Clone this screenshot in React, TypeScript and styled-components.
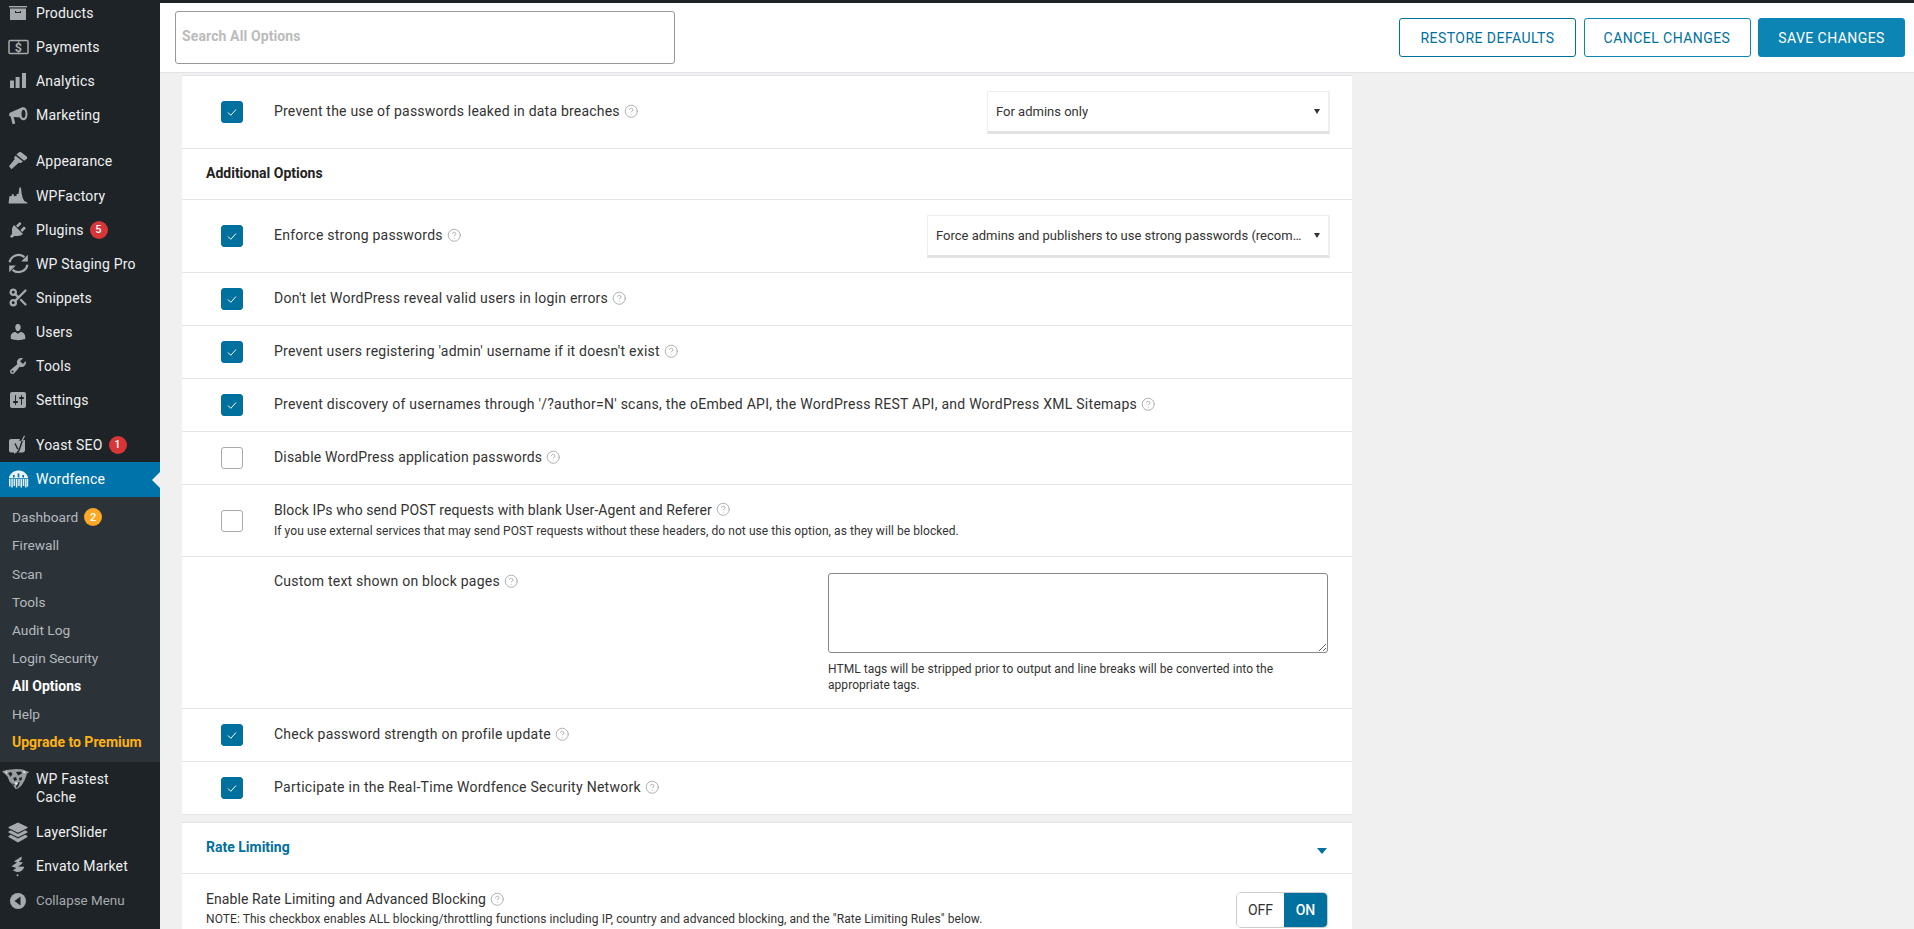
import { ReactNode } from "react";
import styled, { createGlobalStyle } from "styled-components";
import { CircleHelp, Scissors } from "lucide-react";

const GlobalStyle = createGlobalStyle`
  * { box-sizing: border-box; }
  html, body { margin: 0; padding: 0; height: 100%; overflow: hidden; }
  body { font-family: Roboto, "Liberation Sans", sans-serif; background: #f0f0f0; color: #333; }
`;

const blue = "#00709e";
const iconGray = "#a7aaad";

const Page = styled.div`
  display: grid;
  grid-template-columns: 160px 1fr;
  width: 1914px;
  height: 929px;
  overflow: hidden;
`;

/* sidebar */

const Sidebar = styled.nav`
  background: #1d2327;
  height: 929px;
  overflow: hidden;
`;

const MenuList = styled.div`
  margin-top: -4px;
`;

const MenuItem = styled.div<{ $gap?: number; $active?: boolean; $tall?: boolean; $dim?: boolean }>`
  position: relative;
  display: flex;
  align-items: ${(p) => (p.$tall ? "flex-start" : "center")};
  height: ${(p) => (p.$tall ? "53px" : p.$active ? "35px" : "34.1px")};
  margin-top: ${(p) => p.$gap ?? 0}px;
  padding-top: ${(p) => (p.$tall ? "8px" : "0")};
  padding-bottom: ${(p) => (p.$active ? "2px" : "0")};
  background: ${(p) => (p.$active ? "#0073aa" : "transparent")};
  color: ${(p) => (p.$dim ? iconGray : p.$active ? "#fff" : "#f0f0f1")};
  font-size: ${(p) => (p.$dim ? "13.4px" : "14px")};
  letter-spacing: ${(p) => (p.$dim ? "0" : "0.2px")};
  line-height: 18px;
`;

const IconSlot = styled.span`
  flex: 0 0 36px;
  display: flex;
  justify-content: center;
  align-items: center;
  svg { display: block; }
`;

const ItemLabel = styled.span`
  white-space: pre-line;
`;

const Badge = styled.span<{ $color: string }>`
  display: inline-flex;
  align-items: center;
  justify-content: center;
  width: 18px;
  height: 18px;
  margin-left: 6px;
  border-radius: 50%;
  background: ${(p) => p.$color};
  color: #fff;
  font-size: 11px;
  font-weight: 500;
`;

const ActiveNotch = styled.span`
  position: absolute;
  right: 0;
  top: 50%;
  margin-top: -8px;
  border: 8px solid transparent;
  border-right-color: #f0f0f0;
  border-left-width: 0;
`;

const SubMenu = styled.div`
  background: #2c3338;
  padding: 6px 0;
`;

const SubItem = styled.div<{ $tone?: "current" | "upgrade" }>`
  display: flex;
  align-items: center;
  height: 28.125px;
  padding-left: 12px;
  font-size: ${(p) => (p.$tone ? "14px" : "13.7px")};
  font-weight: ${(p) => (p.$tone ? 700 : 400)};
  color: ${(p) => (p.$tone === "current" ? "#fff" : p.$tone === "upgrade" ? "#fcb214" : "#b4b9be")};
`;

/* main column */

const Main = styled.main`
  min-width: 0;
  height: 929px;
  overflow: hidden;
  background: #f0f0f0;
  border-top: 3px solid #1d2327;
`;

const Toolbar = styled.div`
  display: flex;
  align-items: center;
  height: 70px;
  padding: 0 9px 0 15px;
  background: #fff;
  border-bottom: 1px solid #e2e4e7;
`;

const SearchInput = styled.input`
  width: 500px;
  height: 53px;
  padding: 0 6px 3px;
  border: 1px solid #999;
  border-radius: 3px;
  font-family: inherit;
  font-size: 14px;
  font-weight: 700;
  letter-spacing: 0.12px;
  background: #fff;
  &::placeholder { color: #bbb; opacity: 1; }
`;

const Actions = styled.div`
  display: flex;
  gap: 7.5px;
  margin-left: auto;
`;

const ActionButton = styled.button<{ $primary?: boolean; $width: number; $edge: string }>`
  width: ${(p) => p.$width}px;
  height: 39px;
  border: 1px solid ${(p) => p.$edge};
  border-radius: 3px;
  background: ${(p) => (p.$primary ? "#0c84b4" : "#fff")};
  color: ${(p) => (p.$primary ? "#fff" : blue)};
  font-family: inherit;
  font-size: 14px;
  letter-spacing: 0.45px;
  text-transform: uppercase;
`;

const Content = styled.div`
  padding: 2px 0 0 22px;
  width: 1192px;
`;

const Card = styled.section<{ $spaced?: boolean }>`
  background: #fff;
  margin-top: ${(p) => (p.$spaced ? "7px" : "0")};
  border-top: 1px solid #e2e4e7;
  border-bottom: 1px solid #e2e4e7;
`;

const Row = styled.div<{ $h: number; $top?: boolean; $last?: boolean }>`
  display: flex;
  align-items: ${(p) => (p.$top ? "flex-start" : "center")};
  height: ${(p) => p.$h}px;
  padding: 0 22px 0 39px;
  border-bottom: ${(p) => (p.$last ? "none" : "1px solid #e2e4e7")};
`;

const HeadRow = styled.div<{ $h: number }>`
  display: flex;
  align-items: center;
  justify-content: space-between;
  height: ${(p) => p.$h}px;
  padding: 0 25px 2px 24px;
  border-bottom: 1px solid #e2e4e7;
`;

const SectionTitle = styled.h3<{ $link?: boolean }>`
  margin: 0;
  font-size: 14px;
  font-weight: 700;
  color: ${(p) => (p.$link ? blue : "#222")};
`;

const CaretDown = styled.span`
  margin-top: 8px;
  border-style: solid;
  border-width: 6px 5.5px 0;
  border-color: ${blue} transparent transparent;
`;

const CheckBox = styled.span<{ $on: boolean }>`
  flex: 0 0 22px;
  display: flex;
  align-items: center;
  justify-content: center;
  width: 22px;
  height: 22px;
  margin-right: 31px;
  border-radius: 3px;
  background: ${(p) => (p.$on ? blue : "#fff")};
  border: 1px solid ${(p) => (p.$on ? blue : "#aaa")};
`;

const Spacer = styled.span`
  flex: 0 0 53px;
`;

const LabelBlock = styled.div<{ $pushed?: boolean }>`
  margin-top: ${(p) => (p.$pushed ? "14px" : "-2px")};
`;

const LabelText = styled.div<{ $spacing: number }>`
  display: flex;
  align-items: center;
  gap: 4px;
  font-size: 14px;
  line-height: 20px;
  color: #333;
  letter-spacing: ${(p) => p.$spacing}px;
`;

const HelpIcon = styled(CircleHelp)`
  flex: none;
  width: 14.5px;
  height: 14.5px;
  color: #a3a3a3;
`;

const SubText = styled.div<{ $tight?: boolean }>`
  margin-top: ${(p) => (p.$tight ? "1px" : "2px")};
  font-size: 12px;
  line-height: 18px;
  letter-spacing: 0.07px;
  color: #333;
`;

const FakeSelect = styled.div<{ $width: number }>`
  position: relative;
  display: flex;
  align-items: center;
  flex: none;
  width: ${(p) => p.$width}px;
  height: 43px;
  margin-left: auto;
  padding: 0 22px 0 8px;
  background: #fff;
  border: 1px solid #eee;
  border-bottom: 3px solid #e2e2e2;
  border-right-width: 2px;
  font-size: 13px;
  color: #333;
`;

const SelectText = styled.span`
  overflow: hidden;
  white-space: nowrap;
  text-overflow: ellipsis;
`;

const SelectArrow = styled.span`
  position: absolute;
  right: 8px;
  top: 17px;
  border-style: solid;
  border-width: 5px 3.5px 0;
  border-color: #333 transparent transparent;
`;

const TextColumn = styled.div`
  flex: none;
  width: 500px;
  margin: 16px 2px 0 auto;
`;

const BlockText = styled.textarea`
  display: block;
  width: 500px;
  height: 80px;
  border: 1px solid #888;
  border-radius: 3px;
  background: #fff;
`;

const HelpNote = styled.div`
  margin-top: 8px;
  font-size: 12px;
  line-height: 16px;
  letter-spacing: 0.05px;
  color: #333;
`;

const RateRow = styled.div`
  display: flex;
  justify-content: space-between;
  align-items: flex-start;
  padding: 15px 24px 0 24px;
  height: 70px;
`;

const Toggle = styled.div`
  display: flex;
  flex: none;
  width: 92px;
  height: 36px;
  margin-top: 3px;
  border: 1px solid #ccc;
  border-radius: 5px;
  overflow: hidden;
  font-size: 14px;
`;

const ToggleSide = styled.span<{ $on?: boolean }>`
  display: flex;
  align-items: center;
  justify-content: center;
  flex: ${(p) => (p.$on ? "0 0 43px" : "1")};
  background: ${(p) => (p.$on ? blue : "#fff")};
  color: ${(p) => (p.$on ? "#fff" : "#333")};
  font-weight: ${(p) => (p.$on ? 500 : 400)};
`;

/* sidebar icons, 20 unit box unless noted */

const Dash = ({ d, w = 20 }: { d: string; w?: number }) => (
  <svg width={w} height={w} viewBox="0 0 20 20" fill={iconGray} fillRule="evenodd">
    <path d={d} />
  </svg>
);

const icons: Record<string, ReactNode> = {
  products: (
    <svg width="20" height="20" viewBox="0 0 20 20" fill={iconGray}>
      <rect x="1" y="3" width="18" height="1.4" />
      <path fillRule="evenodd" d="M2 5.5h16V17H2zM7 8v2h6V8h-1v1H8V8z" />
    </svg>
  ),
  payments: (
    <svg width="21" height="20" viewBox="0 0 21 20">
      <rect x="1" y="3.5" width="19" height="13" rx="1" fill="none" stroke={iconGray} strokeWidth="1.5" />
      <text x="10.5" y="14.6" textAnchor="middle" fontSize="12.5" fontWeight="700" fontFamily="Roboto, sans-serif" fill={iconGray}>
        $
      </text>
    </svg>
  ),
  analytics: (
    <svg width="20" height="20" viewBox="0 0 20 20" fill={iconGray}>
      <rect x="2" y="9.5" width="4" height="7.5" />
      <rect x="7.6" y="6" width="4" height="11" />
      <rect x="14" y="2" width="4" height="15" />
    </svg>
  ),
  marketing: (
    <svg width="20" height="20" viewBox="0 0 20 20" fill={iconGray}>
      <path fillRule="evenodd" d="M15.5 2.2c2.4 0 4 3 4 6.8s-1.6 6.3-4 6.3c-1.6 0-3-1.1-3.6-2.8L5.6 12l1.7 6.5-2.7.8-1.9-7.5C1.5 11.4.8 10.2 1.2 9 1.5 8 2.4 7.6 3 7.3l9-4c.8-.7 2-1.100 3.500-1.100zM15.500 4.700c-1.200 0-2 1.900-2 4.300s.8 4 2 4 2-1.600 2-4-.8-4.300-2-4.300z" />
    </svg>
  ),
  appearance: (
    <svg width="20" height="20" viewBox="0 0 20 20" fill={iconGray}>
      <path d="M11 1.200l1.800-.2 6.200 4.800.2 1.700-3 2.300-7.800-6.300z" />
      <path d="M7.600 4.700l7.300 5.900-2 1.500-2.200-.3-7.200 6.400L1 15.200l5.600-6.900-.4-2.300z" />
    </svg>
  ),
  factory: (
    <svg width="20" height="20" viewBox="0 0 20 20" fill={iconGray}>
      <path d="M.8 17.500C.3 17.200 1 15.500 1.400 10.200l2.400-.1V8.200h2v2l2.800-.5V8h1.900l.9-6.500h1.500l.8 6.500 1 4 1.600 3 3 1.600c.3.500 0 .9-.6.900z" />
    </svg>
  ),
  plugins: (
    <Dash d="M13.11 4.360L9.870 7.600 8 5.730l3.240-3.240c.35-.34 1.050-.2 1.560.32.52.51.66 1.210.31 1.550zm-8 1.770l.91-1.120 9.010 9.010-1.190.84c-.71.71-2.630 1.160-3.820 1.160H6.140L4.900 17.260c-.59.59-1.540.59-2.120 0-.59-.58-.59-1.530 0-2.120l1.240-1.240v-3.880c0-1.130.4-3.190 1.090-3.890zm7.260 3.970l3.240-3.240c.34-.35 1.040-.21 1.550.31.52.51.66 1.210.31 1.550l-3.240 3.250z" />
  ),
  staging: (
    <svg width="21" height="21" viewBox="0 0 21 21" fill="none" stroke={iconGray} strokeWidth="2.200">
      <path d="M1.600 9.300A9 9 0 0 1 16.400 4.200" />
      <path d="M19.400 11.700A9 9 0 0 1 4.600 16.800" />
      <path d="M19.800 1.800v6.600h-6.600z" fill={iconGray} stroke="none" />
      <path d="M1.200 19.200v-6.600h6.600z" fill={iconGray} stroke="none" />
    </svg>
  ),
  snippets: <Scissors size={21} strokeWidth={2.6} color={iconGray} />,
  users: (
    <Dash d="M10 9.250c-2.270 0-2.730-3.440-2.730-3.440C7 4.020 7.820 2 9.970 2c2.160 0 2.980 2.020 2.710 3.810 0 0-.41 3.440-2.680 3.440zm0 2.570L12.720 10c2.390 0 4.520 2.330 4.520 4.530v2.490s-3.650 1.130-7.240 1.130c-3.650 0-7.240-1.130-7.240-1.130v-2.490c0-2.250 1.940-4.480 4.470-4.480z" />
  ),
  tools: (
    <Dash d="M16.680 9.770c-1.340 1.340-3.300 1.670-4.950.99l-5.410 6.520c-.99.99-2.590.99-3.580 0s-.99-2.590 0-3.570l6.520-5.420c-.68-1.650-.35-3.610.99-4.950 1.280-1.280 3.120-1.620 4.720-1.060l-2.890 2.890 2.820 2.820 2.860-2.870c.53 1.580.18 3.390-1.080 4.670zM3.810 16.210c.4.39 1.040.39 1.430 0 .4-.4.4-1.040 0-1.430-.39-.4-1.030-.4-1.430 0-.39.39-.39 1.030 0 1.430z" />
  ),
  settings: (
    <Dash d="M18 16V4c0-1.100-.9-2-2-2H4c-1.100 0-2 .9-2 2v12c0 1.100.9 2 2 2h12c1.100 0 2-.9 2-2zM8 11h1c.55 0 1 .45 1 1s-.45 1-1 1H8v1.500c0 .28-.22.5-.5.5s-.5-.22-.5-.5V13H6c-.55 0-1-.45-1-1s.45-1 1-1h1V5.500c0-.28.22-.5.5-.5s.5.22.5.5V11zm5-2h-1c-.55 0-1-.45-1-1s.45-1 1-1h1V5.500c0-.28.22-.5.5-.5s.5.22.5.5V7h1c.55 0 1 .45 1 1s-.45 1-1 1h-1v5.500c0 .28-.22.5-.5.5s-.5-.22-.5-.5V9z" />
  ),
  yoast: (
    <svg width="20" height="20" viewBox="0 0 20 20">
      <path fill={iconGray} d="M3 4h9l-1 2 6-1v10c0 1.500-1 2.500-2.500 2.500H8L6.500 19l-.5-1.500H3c-1.100 0-2-.9-2-2V6c0-1.100.9-2 2-2z" />
      <path fill="none" stroke="#1d2327" strokeWidth="1.400" d="M7 8.500l3 6M14.500 5l-3.500 10.500c-.4 1-1 1.500-2 1.700" />
      <path fill="none" stroke={iconGray} strokeWidth="1.200" d="M16.500.8L14 6" />
    </svg>
  ),
  wordfence: (
    <svg width="21" height="20" viewBox="0 0 21 20" fill="#e9f2f7">
      <path d="M1 8C3 3.500 6.500 1.500 10.500 1.500S18 3.500 20 8v1.200H1z" />
      <path fill="#0073aa" d="M5 8.500h1.600V6H5zM9.700 8.500h1.600V4.600H9.700zM14.400 8.500H16V6h-1.600z" />
      <rect x="1" y="10" width="1.500" height="7.500" />
      <rect x="3.300" y="10" width="1.500" height="8.500" />
      <rect x="5.600" y="10" width="1.500" height="7" />
      <rect x="7.900" y="10" width="1.500" height="8.500" />
      <rect x="10.200" y="10" width="1.500" height="7" />
      <rect x="12.500" y="10" width="1.500" height="8.500" />
      <rect x="14.800" y="10" width="1.500" height="7" />
      <rect x="17.100" y="10" width="1.500" height="8.500" />
      <rect x="19" y="10" width="1.200" height="7.500" />
    </svg>
  ),
  cheetah: (
    <svg width="28" height="22" viewBox="0 0 28 22" style={{ marginTop: -1, marginLeft: -4 }}>
      <path fill="#9a9d9f" d="M0 2.500l4-1.500L9 .5l6-.5 6 .5 3 1.500 3.500 1-2.500 1.500-1 3-1.500 4-3 5-3.500 3-2.500.5-3-4.500-3-3-2-5L3 5z" />
      <path fill="#1d2327" d="M6 4l3-1 1.500 2-2 3zM14 3l5-.5 1 2-4 2zM11 9l3-1 1 3-2.500 1zM17 9l3-1-.5 3-2 1zM9 12l2 3 2-1-1 3zM15 14l3-1-2 5-2 1z" />
      <path fill="#e8e8e8" d="M3 3l2-.5L5 5zM21 2l3 .5-2 2zM12 14l3-1 1 2-2 1z" />
    </svg>
  ),
  layers: (
    <svg width="20" height="21" viewBox="0 0 20 21" fill={iconGray}>
      <path d="M10 .5l9.500 4.500v1L10 10.800.5 6V5z" />
      <path d="M2.800 8.200L.5 9.500v1L10 15.300l9.500-4.800v-1l-2.300-1.300L10 12z" />
      <path d="M2.800 12.700L.5 14v1l9.500 5.500 9.500-5.500v-1l-2.300-1.300L10 16.500z" />
    </svg>
  ),
  envato: (
    <svg width="20" height="21" viewBox="0 0 20 21" fill={iconGray}>
      <path d="M13.500 .5c.8 2.500-.5 4-2.800 5.500l4 .2c-.8 2.200-3 3.200-5.200 4.300l6.800.2c-1 3.500-4 5.500-7.500 5.300L5 14.500l3.200-2.500-4.700-1.800L9 6.500 6 5.500z" />
      <circle cx="9.500" cy="19.200" r="1" />
    </svg>
  ),
  collapse: (
    <svg width="20" height="20" viewBox="0 0 20 20">
      <circle cx="10" cy="10" r="8" fill={iconGray} />
      <path fill="#1d2327" d="M12.500 5.500v9L6.500 10z" />
    </svg>
  ),
};

const topMenu = [
  { icon: "products", label: "Products" },
  { icon: "payments", label: "Payments" },
  { icon: "analytics", label: "Analytics" },
  { icon: "marketing", label: "Marketing" },
  { icon: "appearance", label: "Appearance", gap: 12 },
  { icon: "factory", label: "WPFactory" },
  { icon: "plugins", label: "Plugins", badge: "5" },
  { icon: "staging", label: "WP Staging Pro" },
  { icon: "snippets", label: "Snippets" },
  { icon: "users", label: "Users" },
  { icon: "tools", label: "Tools" },
  { icon: "settings", label: "Settings" },
  { icon: "yoast", label: "Yoast SEO", badge: "1", gap: 11 },
];

function Check() {
  return (
    <svg width="10" height="9" viewBox="0 0 10 9" fill="none" stroke="#fff" strokeWidth="1">
      <path d="M1 4.500l2.800 2.800L9 1.500" />
    </svg>
  );
}

function Label({ children, spacing = 0.24 }: { children: ReactNode; spacing?: number }) {
  return (
    <LabelText $spacing={spacing}>
      <span>{children}</span>
      <HelpIcon strokeWidth={1.4} />
    </LabelText>
  );
}

function CheckRow({ on = true, h = 53, text, last, spacing }: { on?: boolean; h?: number; text: string; last?: boolean; spacing?: number }) {
  return (
    <Row $h={h} $last={last}>
      <CheckBox $on={on}>{on && <Check />}</CheckBox>
      <LabelBlock>
        <Label spacing={spacing}>{text}</Label>
      </LabelBlock>
    </Row>
  );
}

export default function App() {
  return (
    <Page>
      <GlobalStyle />
      <Sidebar>
        <MenuList>
          {topMenu.map((item) => (
            <MenuItem key={item.label} $gap={item.gap}>
              <IconSlot>{icons[item.icon]}</IconSlot>
              <ItemLabel>{item.label}</ItemLabel>
              {item.badge && <Badge $color="#d63638">{item.badge}</Badge>}
            </MenuItem>
          ))}
          <MenuItem $active>
            <IconSlot>{icons.wordfence}</IconSlot>
            <ItemLabel>Wordfence</ItemLabel>
            <ActiveNotch />
          </MenuItem>
          <SubMenu>
            <SubItem>
              Dashboard<Badge $color="#ffa726">2</Badge>
            </SubItem>
            <SubItem>Firewall</SubItem>
            <SubItem>Scan</SubItem>
            <SubItem>Tools</SubItem>
            <SubItem>Audit Log</SubItem>
            <SubItem>Login Security</SubItem>
            <SubItem $tone="current">All Options</SubItem>
            <SubItem>Help</SubItem>
            <SubItem $tone="upgrade">Upgrade to Premium</SubItem>
          </SubMenu>
          <MenuItem $tall>
            <IconSlot>{icons.cheetah}</IconSlot>
            <ItemLabel>{"WP Fastest\nCache"}</ItemLabel>
          </MenuItem>
          <MenuItem>
            <IconSlot>{icons.layers}</IconSlot>
            <ItemLabel>LayerSlider</ItemLabel>
          </MenuItem>
          <MenuItem>
            <IconSlot>{icons.envato}</IconSlot>
            <ItemLabel>Envato Market</ItemLabel>
          </MenuItem>
          <MenuItem $dim>
            <IconSlot>{icons.collapse}</IconSlot>
            <ItemLabel>Collapse Menu</ItemLabel>
          </MenuItem>
        </MenuList>
      </Sidebar>

      <Main>
        <Toolbar>
          <SearchInput placeholder="Search All Options" />
          <Actions>
            <ActionButton $width={177} $edge={blue}>
              Restore Defaults
            </ActionButton>
            <ActionButton $width={167} $edge="#0a86b5">
              Cancel Changes
            </ActionButton>
            <ActionButton $primary $width={147} $edge="#0c84b4">
              Save Changes
            </ActionButton>
          </Actions>
        </Toolbar>

        <Content>
          <Card>
            <Row $h={73}>
              <CheckBox $on>
                <Check />
              </CheckBox>
              <LabelBlock>
                <Label spacing={0.21}>Prevent the use of passwords leaked in data breaches</Label>
              </LabelBlock>
              <FakeSelect $width={343}>
                <SelectText>For admins only</SelectText>
                <SelectArrow />
              </FakeSelect>
            </Row>
            <HeadRow $h={51}>
              <SectionTitle>Additional Options</SectionTitle>
            </HeadRow>
            <Row $h={73}>
              <CheckBox $on>
                <Check />
              </CheckBox>
              <LabelBlock>
                <Label>Enforce strong passwords</Label>
              </LabelBlock>
              <FakeSelect $width={403}>
                <SelectText>Force admins and publishers to use strong passwords (recommended)</SelectText>
                <SelectArrow />
              </FakeSelect>
            </Row>
            <CheckRow text="Don't let WordPress reveal valid users in login errors" />
            <CheckRow text="Prevent users registering 'admin' username if it doesn't exist" />
            <CheckRow spacing={0.26} text="Prevent discovery of usernames through '/?author=N' scans, the oEmbed API, the WordPress REST API, and WordPress XML Sitemaps" />
            <CheckRow on={false} spacing={0.17} text="Disable WordPress application passwords" />
            <Row $h={72}>
              <CheckBox $on={false} />
              <LabelBlock>
                <Label spacing={0.09}>Block IPs who send POST requests with blank User-Agent and Referer</Label>
                <SubText>If you use external services that may send POST requests without these headers, do not use this option, as they will be blocked.</SubText>
              </LabelBlock>
            </Row>
            <Row $h={152} $top>
              <Spacer />
              <LabelBlock $pushed>
                <Label>Custom text shown on block pages</Label>
              </LabelBlock>
              <TextColumn>
                <BlockText />
                <HelpNote>HTML tags will be stripped prior to output and line breaks will be converted into the appropriate tags.</HelpNote>
              </TextColumn>
            </Row>
            <CheckRow text="Check password strength on profile update" />
            <CheckRow h={52} spacing={0.28} text="Participate in the Real-Time Wordfence Security Network" last />
          </Card>

          <Card $spaced>
            <HeadRow $h={51}>
              <SectionTitle $link>Rate Limiting</SectionTitle>
              <CaretDown />
            </HeadRow>
            <RateRow>
              <div>
                <Label spacing={0.09}>Enable Rate Limiting and Advanced Blocking</Label>
                <SubText $tight>NOTE: This checkbox enables ALL blocking/throttling functions including IP, country and advanced blocking, and the "Rate Limiting Rules" below.</SubText>
              </div>
              <Toggle>
                <ToggleSide>OFF</ToggleSide>
                <ToggleSide $on>ON</ToggleSide>
              </Toggle>
            </RateRow>
          </Card>
        </Content>
      </Main>
    </Page>
  );
}
